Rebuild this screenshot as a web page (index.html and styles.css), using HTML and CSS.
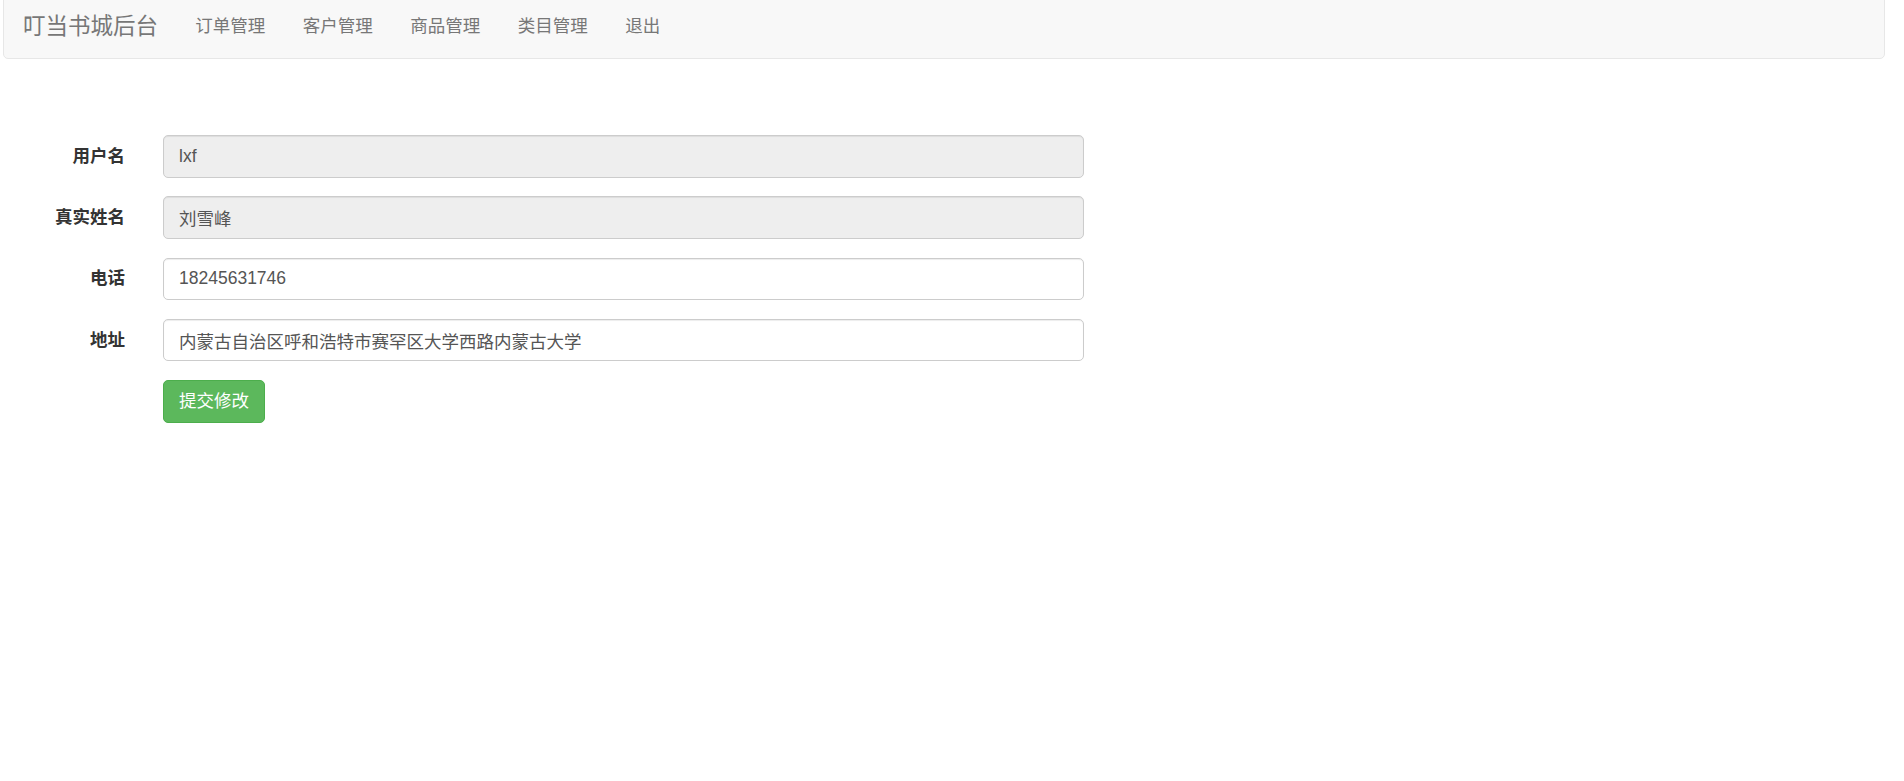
FILE: index.html
```html
<!DOCTYPE html>
<html lang="zh-CN">
<head>
<meta charset="utf-8">
<title>叮当书城后台</title>
<link rel="stylesheet" href="styles.css">
</head>
<body>
<nav class="navbar">
  <a class="brand" href="#">叮当书城后台</a>
  <ul class="nav">
    <li><a href="#">订单管理</a></li>
    <li><a href="#">客户管理</a></li>
    <li><a href="#">商品管理</a></li>
    <li><a href="#">类目管理</a></li>
    <li><a href="#">退出</a></li>
  </ul>
</nav>
<form class="form">
  <div class="row">
    <label class="label">用户名</label>
    <input class="input" type="text" value="lxf" disabled>
  </div>
  <div class="row">
    <label class="label">真实姓名</label>
    <input class="input" type="text" value="刘雪峰" disabled>
  </div>
  <div class="row">
    <label class="label">电话</label>
    <input class="input" type="text" value="18245631746">
  </div>
  <div class="row">
    <label class="label">地址</label>
    <input class="input" type="text" value="内蒙古自治区呼和浩特市赛罕区大学西路内蒙古大学">
  </div>
  <div class="row">
    <span></span>
    <div><button class="btn" type="button">提交修改</button></div>
  </div>
</form>
</body>
</html>
```

FILE: styles.css
```css
* { box-sizing: border-box; }
html, body {
  margin: 0;
  padding: 0;
  background: #fff;
  font-family: "Liberation Sans", Arial, "Noto Sans CJK SC", sans-serif;
  font-size: 17.5px;
  line-height: 1.42857;
  color: #333;
}
.navbar {
  display: flex;
  align-items: center;
  margin: -6px 19px 0 3px;
  height: 65px;
  background: #f8f8f8;
  border: 1px solid #e7e7e7;
  border-radius: 5px;
  padding: 0 0 0 19px;
}
.brand {
  font-size: 22.5px;
  line-height: 25px;
  color: #777;
  text-decoration: none;
  padding-right: 18.5px;
}
.nav {
  display: flex;
  list-style: none;
  margin: 0;
  padding: 0;
}
.nav a {
  display: block;
  padding: 0 18.75px;
  line-height: 25px;
  color: #777;
  text-decoration: none;
  font-size: 17.5px;
}
.form {
  padding-top: 76px;
}
.row {
  display: grid;
  grid-template-columns: 125px 921px;
  column-gap: 38px;
  align-items: center;
  margin-bottom: 18.75px;
}
.label {
  text-align: right;
  font-weight: bold;
  color: #333;
}
.input {
  display: block;
  width: 100%;
  height: 42.5px;
  padding: 7.5px 15px;
  font-family: inherit;
  font-size: 17.5px;
  line-height: 1.42857;
  color: #555;
  background: #fff;
  border: 1px solid #ccc;
  border-radius: 5px;
  box-shadow: inset 0 1px 1px rgba(0,0,0,.075);
}
.input:disabled {
  background: #eee;
  color: #555;
  opacity: 1;
}
.btn {
  display: inline-block;
  height: 42.5px;
  padding: 7.5px 15px;
  font-family: inherit;
  font-size: 17.5px;
  line-height: 1.42857;
  color: #fff;
  background: #5cb85c;
  border: 1px solid #4cae4c;
  border-radius: 5px;
  cursor: pointer;
}
```
